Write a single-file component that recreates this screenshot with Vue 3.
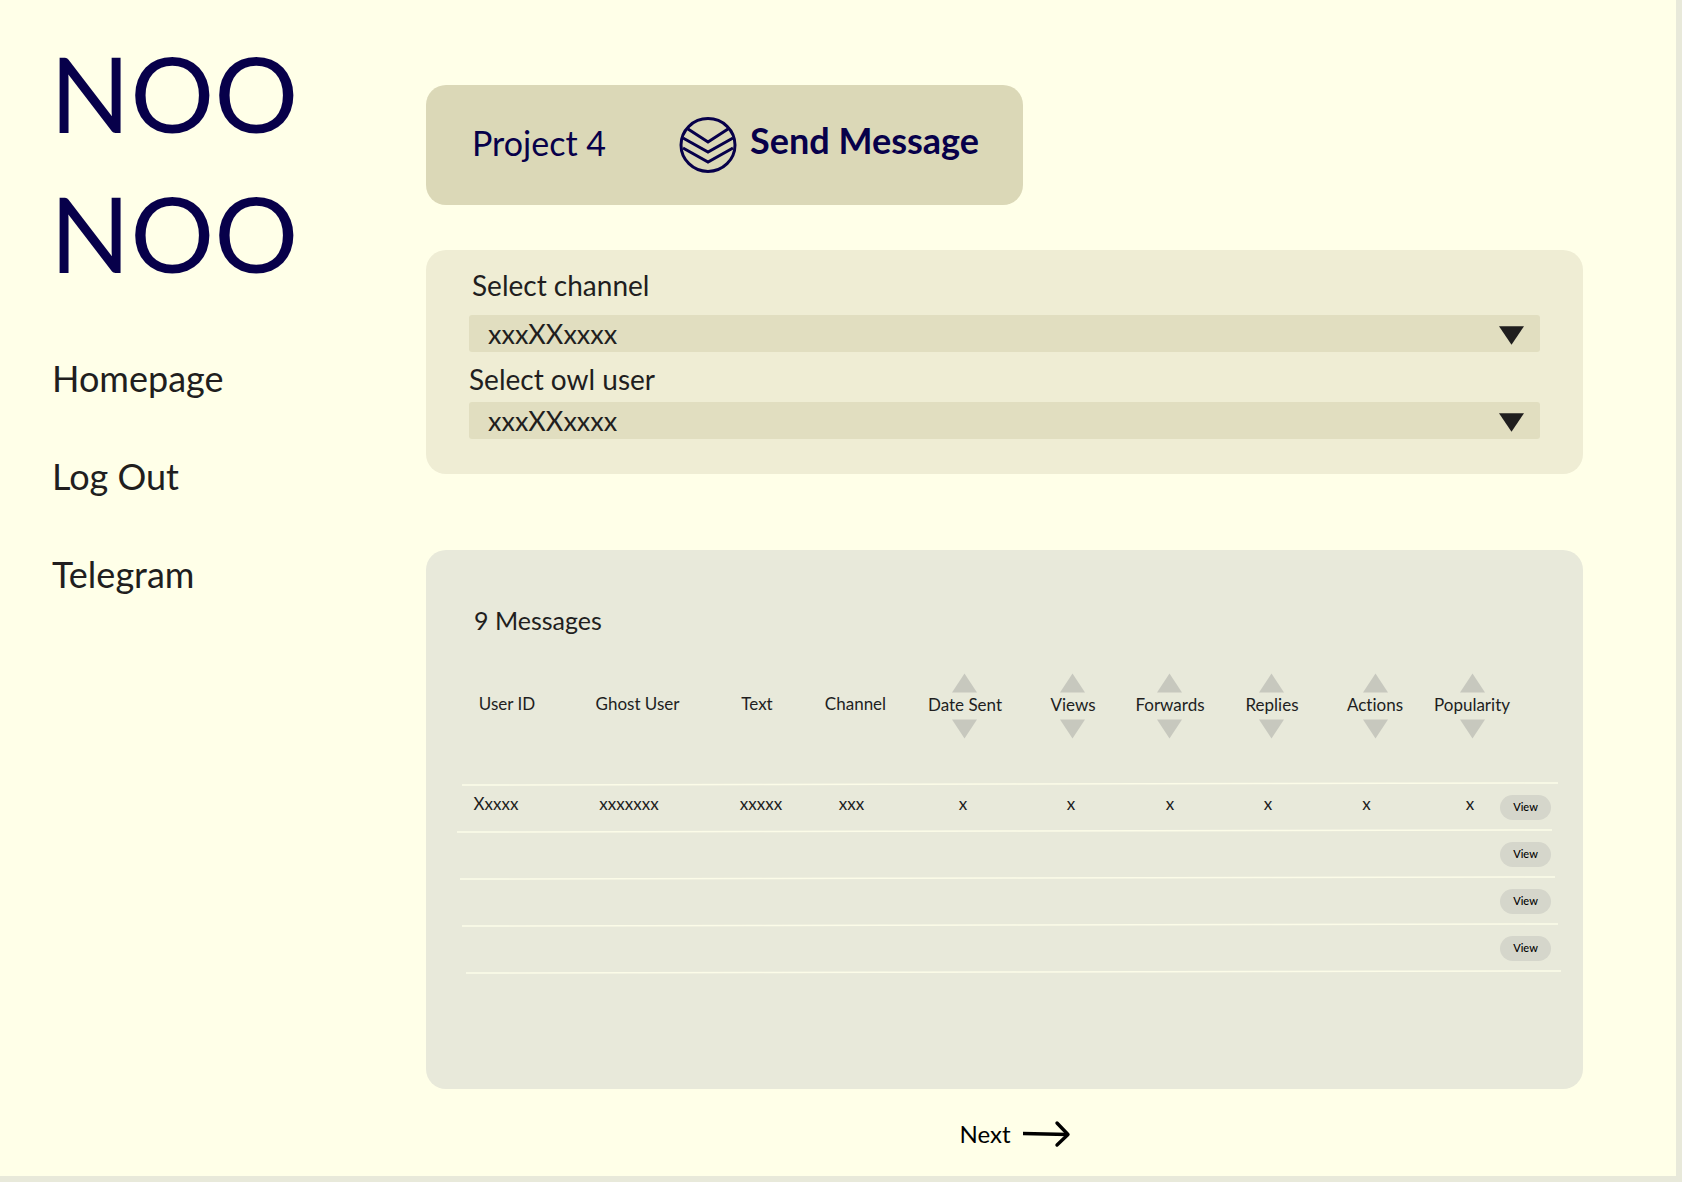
<script setup>
import { ref } from 'vue'

const links = ['Homepage', 'Log Out', 'Telegram']

const channel = ref('xxxXXxxxx')
const owlUser = ref('xxxXXxxxx')

const columns = [
  { name: 'User ID' },
  { name: 'Ghost User' },
  { name: 'Text' },
  { name: 'Channel' },
  { name: 'Date Sent', sortable: true },
  { name: 'Views', sortable: true },
  { name: 'Forwards', sortable: true },
  { name: 'Replies', sortable: true },
  { name: 'Actions', sortable: true },
  { name: 'Popularity', sortable: true },
]

const empty = Array(10).fill('')
const rows = [
  ['Xxxxx', 'xxxxxxx', 'xxxxx', 'xxx', 'x', 'x', 'x', 'x', 'x', 'x'],
  empty,
  empty,
  empty,
]

// Row rules, hand-drawn: each one starts and ends a little differently.
const rules = [
  { from: 28, to: 1124, y: 3 },
  { from: 23, to: 1118, y: 50 },
  { from: 26, to: 1121, y: 97 },
  { from: 28, to: 1124, y: 144 },
  { from: 32, to: 1127, y: 191 },
]
</script>

<template>
  <div class="page">
    <aside class="sidebar">
      <h1 class="logo">NOO<br />NOO</h1>
      <nav class="nav">
        <a v-for="link in links" :key="link" href="#">{{ link }}</a>
      </nav>
    </aside>

    <main class="main">
      <header class="toolbar">
        <h2 class="project">Project 4</h2>
        <button class="send" type="button">
          <svg class="send-icon" viewBox="0 0 58 56" aria-hidden="true">
            <ellipse cx="29" cy="28" rx="27" ry="26.4" />
            <path d="M9 12 29 25 49 12M4 21 29 35 54 21M4 31 29 45 54 31" />
          </svg>
          <span>Send Message</span>
        </button>
      </header>

      <section class="filters">
        <label for="channel">Select channel</label>
        <div class="picker">
          <select id="channel" v-model="channel">
            <option>xxxXXxxxx</option>
          </select>
          <svg viewBox="0 0 26 19" aria-hidden="true"><path d="M0 0H26L13 19Z" /></svg>
        </div>
        <label for="owl-user">Select owl user</label>
        <div class="picker">
          <select id="owl-user" v-model="owlUser">
            <option>xxxXXxxxx</option>
          </select>
          <svg viewBox="0 0 26 19" aria-hidden="true"><path d="M0 0H26L13 19Z" /></svg>
        </div>
      </section>

      <section class="messages">
        <h3>9 Messages</h3>
        <table>
          <thead>
            <tr>
              <th
                v-for="column in columns"
                :key="column.name"
                :class="{ plain: !column.sortable }"
                scope="col"
              >
                <button v-if="column.sortable" class="sort" type="button">
                  <svg viewBox="0 0 26 20" aria-hidden="true"><path d="M13 0 26 20H0Z" /></svg>
                  <span>{{ column.name }}</span>
                  <svg viewBox="0 0 26 20" aria-hidden="true"><path d="M0 0H26L13 20Z" /></svg>
                </button>
                <template v-else>{{ column.name }}</template>
              </th>
            </tr>
          </thead>
          <tbody>
            <tr v-for="(row, r) in rows" :key="r">
              <td v-for="(cell, c) in row" :key="c">{{ cell }}</td>
              <td class="action"><button class="view" type="button">View</button></td>
            </tr>
          </tbody>
        </table>
        <svg class="rules" viewBox="0 0 1157 194" preserveAspectRatio="none" aria-hidden="true">
          <line
            v-for="rule in rules"
            :key="rule.y"
            :x1="rule.from + 8"
            :y1="rule.y"
            :x2="rule.to + 8"
            :y2="rule.y - 2"
          />
        </svg>
      </section>

      <footer class="pager">
        <a href="#">
          <span>Next</span>
          <svg viewBox="0 0 48 28" aria-hidden="true">
            <path d="M0 13.5 45 14.5" />
            <path class="head" d="M34 3 45 14.5 34 25" />
          </svg>
        </a>
      </footer>
    </main>
  </div>
</template>

<style>
body {
  margin: 0;
  background: #e8e9da;
}
</style>

<style scoped>
.page {
  box-sizing: border-box;
  display: flex;
  min-height: 100vh;
  border-right: 6px solid #e8e9da;
  border-bottom: 6px solid #e8e9da;
  background: #ffffe8;
  color: #211e1e;
  font-family: Lato, 'Liberation Sans', sans-serif;
  font-variant-ligatures: none;
}

button,
select {
  margin: 0;
  padding: 0;
  border: 0;
  background: none;
  color: inherit;
  font: inherit;
  font-variant-ligatures: none;
}

a {
  color: inherit;
  text-decoration: none;
}

h1,
h2,
h3 {
  margin: 0;
  font-weight: 400;
}

.sidebar {
  box-sizing: border-box;
  flex: 0 0 426px;
  padding: 22px 0 0 50px;
}

.logo {
  color: #07004a;
  font-size: 105px;
  line-height: 140px;
}

.nav {
  display: flex;
  flex-direction: column;
  align-items: flex-start;
  gap: 50px;
  margin-top: 52px;
  padding-left: 2px;
  font-size: 36px;
  line-height: 48px;
}

.main {
  flex: 1;
  min-width: 0;
  padding: 85px 93px 0 0;
}

.toolbar {
  box-sizing: border-box;
  display: flex;
  align-items: center;
  justify-content: space-between;
  width: 597px;
  height: 120px;
  padding: 0 44px 0 46px;
  border-radius: 20px;
  background: #dbd8b7;
  color: #07004a;
}

.project {
  padding-bottom: 6px;
  font-size: 34px;
}

.send {
  display: flex;
  align-items: center;
  gap: 13px;
  font-size: 36px;
  font-weight: 700;
  line-height: 46px;
}

.send span {
  padding-bottom: 10px;
}

.send-icon {
  width: 58px;
  height: 56px;
  fill: none;
  stroke: #07004a;
  stroke-width: 3;
}

.filters {
  box-sizing: border-box;
  display: flex;
  flex-direction: column;
  height: 224px;
  margin-top: 45px;
  padding: 17px 43px 0;
  border-radius: 20px;
  background: #efedd4;
  font-size: 28px;
}

.filters label {
  padding: 0 3px 12px;
  line-height: 36px;
}

.picker + label {
  padding: 9px 0 5px;
}

.picker {
  display: grid;
  align-items: center;
}

.picker select,
.picker svg {
  grid-area: 1 / 1;
}

.picker select {
  width: 100%;
  height: 37px;
  padding: 0 19px 1px;
  border-radius: 3px;
  background: #e1dec0;
  font-size: 27px;
  appearance: none;
}

.picker svg {
  justify-self: end;
  width: 25px;
  height: 19px;
  margin: 4px 16px 0 0;
  fill: #1f1e1e;
  pointer-events: none;
}

.messages {
  position: relative;
  box-sizing: border-box;
  height: 539px;
  margin-top: 76px;
  padding: 50px 22px 0 8px;
  border-radius: 20px;
  background: #e8e9da;
}

.messages h3 {
  padding-left: 40px;
  font-size: 25px;
  line-height: 40px;
}

table {
  display: block;
  margin-top: 33px;
  font-size: 17px;
  line-height: 20px;
}

thead,
tbody {
  display: block;
}

tr {
  display: grid;
  align-items: center;
}

th,
td {
  padding: 0;
  font-weight: 400;
  text-align: center;
  white-space: nowrap;
}

thead tr {
  grid-template-columns: 110fr 151fr 88fr 109fr 110fr 106fr 88fr 116fr 90fr 104fr;
  height: 66px;
  padding: 0 37px 0 18px;
}

th.plain {
  padding-bottom: 5px;
}

tbody {
  margin-top: 45px;
}

tbody tr {
  grid-template-columns: 124fr 142fr 122fr 59fr 164fr 52fr 146fr 50fr 147fr 60fr 52fr;
  height: 47px;
  padding-right: 9px;
}

td {
  padding-bottom: 8px;
}

td.action {
  padding-bottom: 0;
}

.sort {
  display: inline-flex;
  flex-direction: column;
  align-items: center;
  gap: 3px;
  vertical-align: top;
}

.sort span {
  padding-bottom: 2px;
  line-height: 18px;
}

.sort svg {
  width: 25px;
  height: 20px;
  fill: #c7c8be;
}

.view {
  display: block;
  width: 51px;
  height: 25px;
  padding-bottom: 1px;
  border-radius: 13px;
  background: #d5d6cb;
  color: #000;
  font-size: 11px;
  font-weight: 500;
}

.rules {
  position: absolute;
  top: 232px;
  left: 0;
  width: 100%;
  height: 194px;
  fill: none;
  stroke: #fcfce8;
  stroke-width: 1.5;
  pointer-events: none;
}

.pager {
  display: flex;
  justify-content: center;
  padding: 25px 0 22px 21px;
  color: #000;
  font-size: 24px;
  line-height: 40px;
}

.pager a {
  display: flex;
  align-items: center;
  gap: 12px;
}

.pager svg {
  width: 48px;
  height: 28px;
  fill: none;
  stroke: #000;
  stroke-width: 3.4;
}

.pager .head {
  stroke-linecap: round;
  stroke-linejoin: round;
}
</style>
